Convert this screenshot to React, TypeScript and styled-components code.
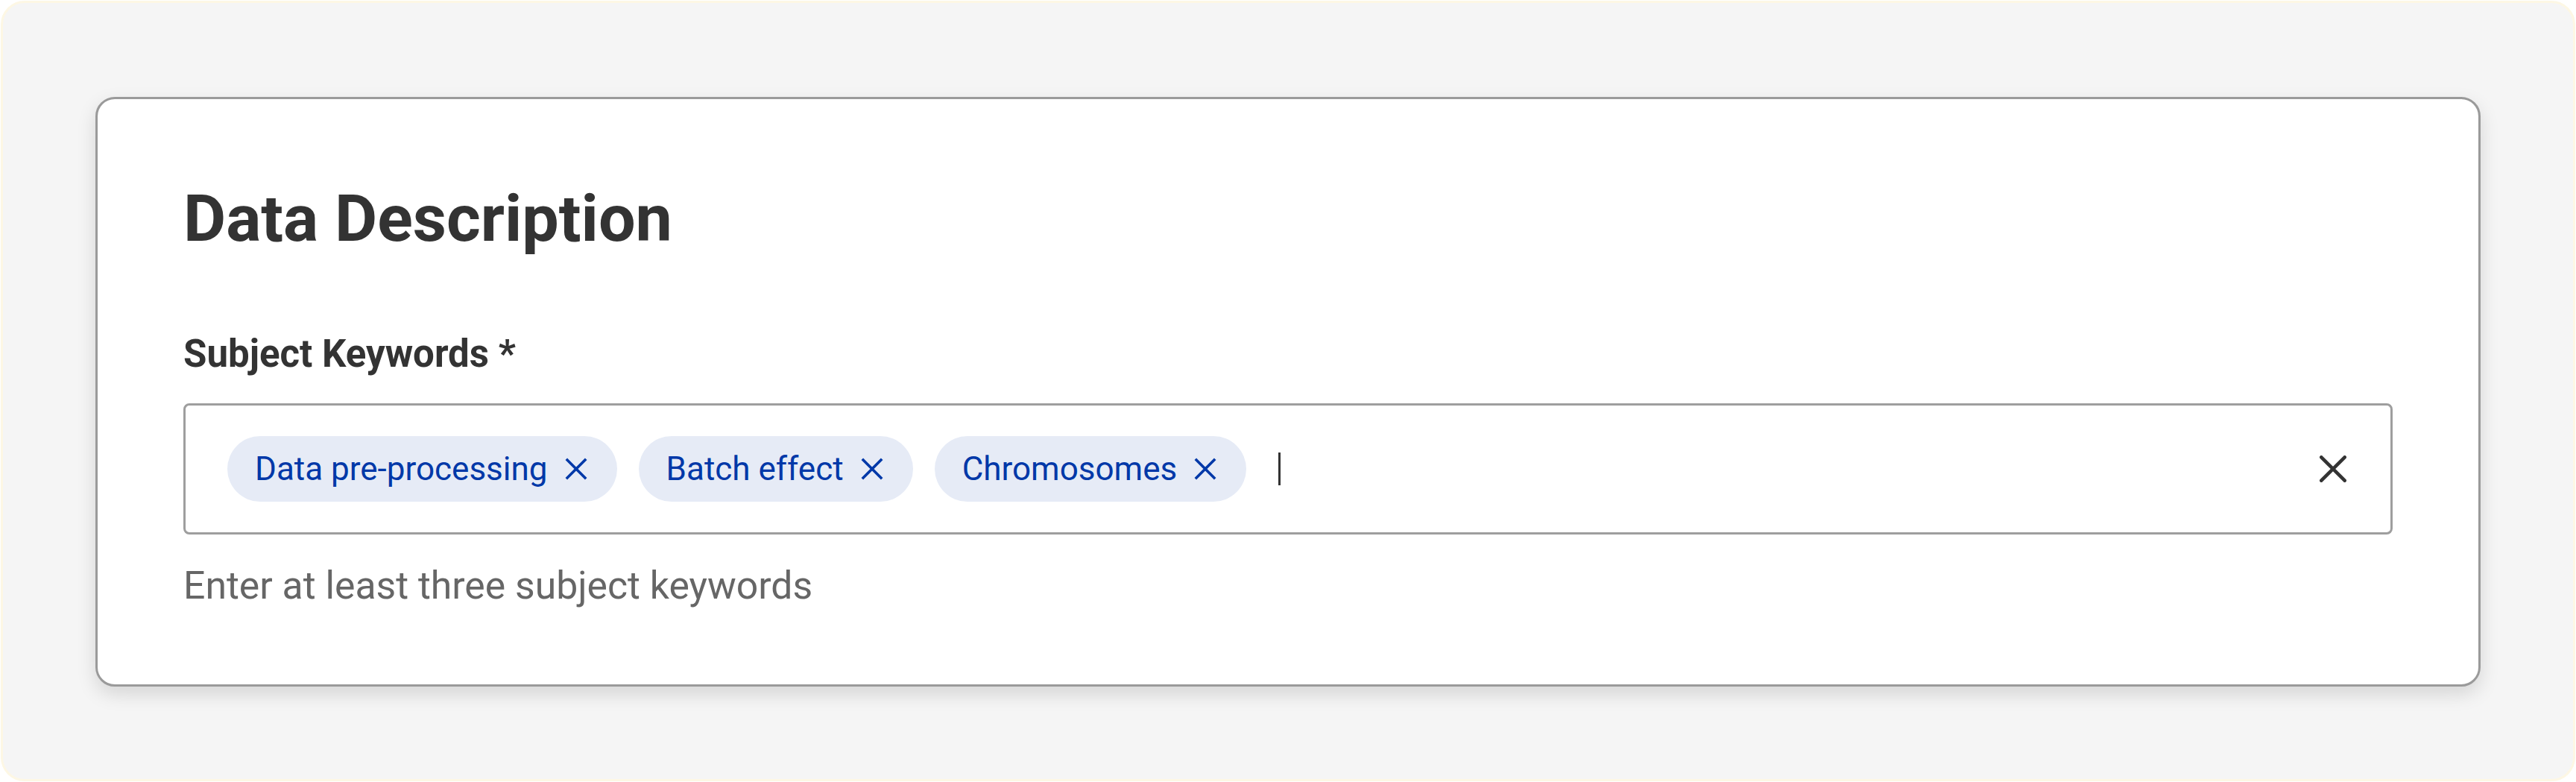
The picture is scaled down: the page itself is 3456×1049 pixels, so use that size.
import styled, { createGlobalStyle } from "styled-components";

const GlobalStyle = createGlobalStyle`
  html, body {
    margin: 0;
    padding: 0;
    background: #ffffff;
  }
  body {
    font-family: Roboto, "Liberation Sans", Arial, sans-serif;
  }
`;

const keywords = ["Data pre-processing", "Batch effect", "Chromosomes"];

const CloseGlyph = ({ size, stroke, cap }: { size: number; stroke: number; cap: "round" | "butt" | "square" }) => (
  <svg width={size} height={size} viewBox={`0 0 ${size} ${size}`} fill="none">
    <path
      d={`M${stroke / 2} ${stroke / 2} L${size - stroke / 2} ${size - stroke / 2} M${size - stroke / 2} ${stroke / 2} L${stroke / 2} ${size - stroke / 2}`}
      stroke="currentColor"
      strokeWidth={stroke}
      strokeLinecap={cap}
    />
  </svg>
);

export default function App() {
  return (
    <>
      <GlobalStyle />
      <Frame>
        <Card>
          <Title>Data Description</Title>
          <Label>Subject Keywords *</Label>
          <KeywordField>
            <ChipList>
              {keywords.map((word) => (
                <Chip key={word}>
                  <ChipText>{word}</ChipText>
                  <ChipRemove>
                    <CloseGlyph size={30} stroke={3.6} cap="butt" />
                  </ChipRemove>
                </Chip>
              ))}
              <TypingArea>
                <Caret />
              </TypingArea>
            </ChipList>
            <ClearButton>
              <CloseGlyph size={36} stroke={4.6} cap="round" />
            </ClearButton>
          </KeywordField>
          <Helper>Enter at least three subject keywords</Helper>
        </Card>
      </Frame>
    </>
  );
}

const Frame = styled.div`
  box-sizing: border-box;
  margin: 1px;
  height: 1047px;
  padding: 126px 124px;
  background: #f5f5f5;
  border: 3px solid #fdf7e4;
  border-radius: 32px;
`;

const Card = styled.section`
  display: flex;
  flex-direction: column;
  background: #ffffff;
  border: 3px solid #9a9a9a;
  border-radius: 26px;
  padding: 108px 115px 102px;
  box-shadow: 0 10px 26px rgba(0, 0, 0, 0.13);
`;

const Title = styled.h2`
  margin: 0;
  font-size: 88px;
  font-weight: 700;
  line-height: normal;
  color: #333333;
`;

const Label = styled.label`
  margin-top: 101px;
  font-size: 51px;
  font-weight: 700;
  line-height: normal;
  color: #333333;
`;

const KeywordField = styled.div`
  box-sizing: border-box;
  display: flex;
  align-items: center;
  height: 176px;
  margin-top: 37px;
  padding: 0 56px;
  border: 3px solid #9e9e9e;
  border-radius: 8px;
  background: #ffffff;
`;

const ChipList = styled.div`
  flex: 1;
  display: flex;
  align-items: center;
  gap: 29px;
`;

const Chip = styled.div`
  display: flex;
  align-items: center;
  height: 88px;
  padding: 0 40px 0 37px;
  gap: 23px;
  border-radius: 44px;
  background: #e6ebf6;
  color: #0038a8;
`;

const ChipText = styled.span`
  font-size: 44px;
  line-height: 1;
  white-space: nowrap;
`;

const ChipRemove = styled.span`
  display: flex;
  width: 30px;
  height: 30px;
`;

const TypingArea = styled.div`
  flex: 1;
  display: flex;
  align-items: center;
  padding-left: 14px;
`;

const Caret = styled.span`
  display: block;
  width: 3px;
  height: 44px;
  background: #333333;
`;

const ClearButton = styled.span`
  display: flex;
  width: 36px;
  height: 36px;
  margin-right: 3px;
  color: #333333;
`;

const Helper = styled.p`
  margin: 38px 0 0;
  font-size: 51.7px;
  font-weight: 400;
  line-height: normal;
  color: #666666;
`;
